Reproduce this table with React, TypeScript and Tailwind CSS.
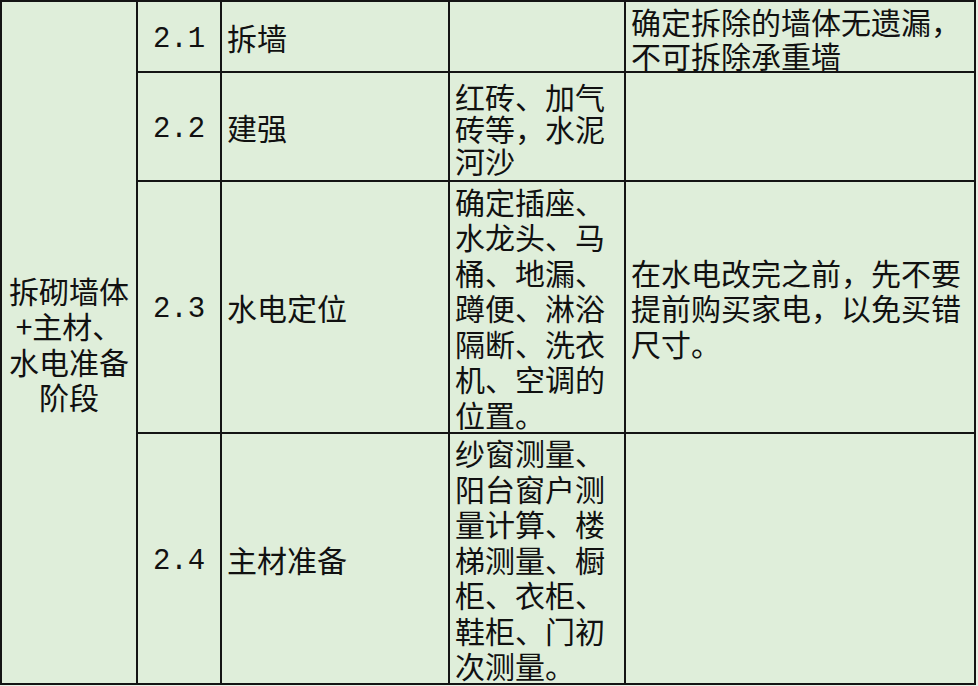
const rows = [
  {
    no: "2.1",
    name: "拆墙",
    material: "",
    note: "确定拆除的墙体无遗漏，不可拆除承重墙",
  },
  {
    no: "2.2",
    name: "建强",
    material: "红砖、加气砖等，水泥河沙",
    note: "",
  },
  {
    no: "2.3",
    name: "水电定位",
    material: "确定插座、水龙头、马桶、地漏、蹲便、淋浴隔断、洗衣机、空调的位置。",
    note: "在水电改完之前，先不要提前购买家电，以免买错尺寸。",
  },
  {
    no: "2.4",
    name: "主材准备",
    material: "纱窗测量、阳台窗户测量计算、楼梯测量、橱柜、衣柜、鞋柜、门初次测量。",
    note: "",
  },
];

const cell = "flex items-center bg-[#dfeeda] pt-[2px]";

export default function App() {
  return (
    <div className="h-[686px] w-[978px] bg-[#e8f0e5]">
      <div
        className="grid w-[976px] grid-cols-[134px_82px_226px_174px_348px] grid-rows-[69px_107px_250px_249px] gap-[2px] bg-[#141414] p-[2px] text-[30px] leading-[35.5px] text-[#111]"
        style={{ fontFamily: '"Noto Sans CJK SC", "Noto Sans", sans-serif' }}
      >
        {/* stage label spans all rows */}
        <div className={`${cell} row-span-4 justify-center text-center`}>
          <p className="w-full">拆砌墙体+主材、水电准备阶段</p>
        </div>

        {rows.map((r) => (
          <div key={r.no} className="contents">
            <div
              className={`${cell} justify-center pt-[6px] text-[29px]`}
              style={{ fontFamily: '"Liberation Mono", monospace' }}
            >
              {r.no}
            </div>
            <div className={`${cell} pl-[5px]`}>{r.name}</div>
            <div className={`${cell} pl-[5px]`}>
              <p className={r.no === "2.2" ? "relative leading-[32px]" : "relative"}>{r.material}</p>
            </div>
            <div className={`${cell} pl-[5px]`}>
              <p className={r.no === "2.1" ? "relative leading-[34px]" : "relative"}>{r.note}</p>
            </div>
          </div>
        ))}
      </div>
    </div>
  );
}
